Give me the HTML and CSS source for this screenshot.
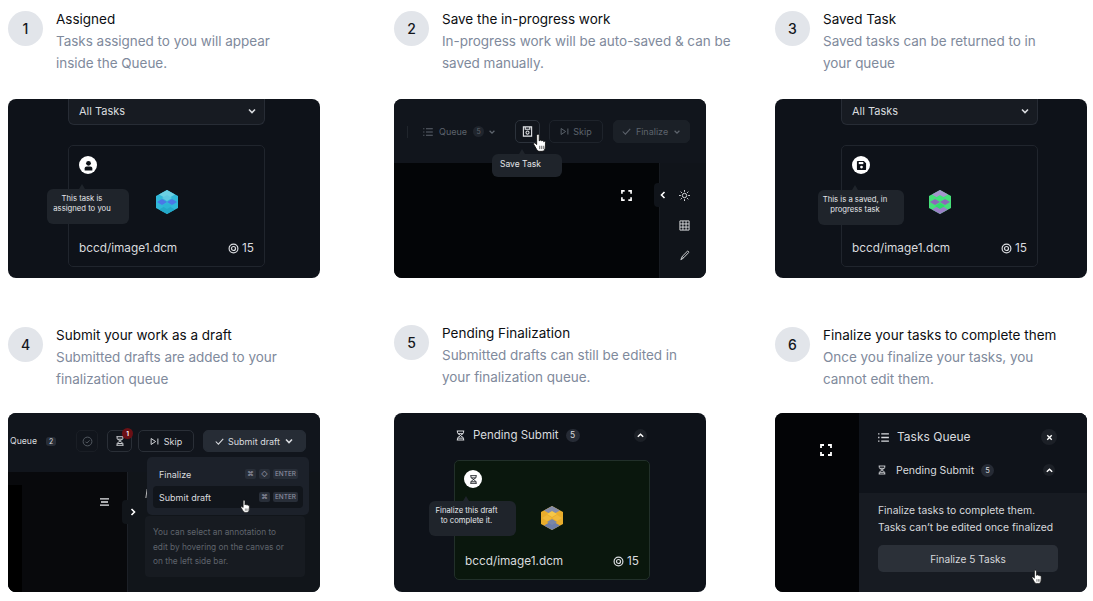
FILE: index.html
```html
<!DOCTYPE html>
<html lang="en">
<head>
<meta charset="utf-8">
<title>Task workflow</title>
<link rel="stylesheet" href="styles.css">
</head>
<body>
<svg class="defs" aria-hidden="true">
  <symbol id="cube" viewBox="0 0 24 24">
    <polygon class="c-side" points="12,0 23,6 23,18 12,24 1,18 1,6"/>
    <polygon class="c-top" points="12,0 20,4.500 12,9 4,4.500"/>
    <polygon class="c-low" points="12,15 20,19.500 12,24 4,19.500"/>
    <polygon class="c-mid" points="2,12 7,9 12,12 7,15"/>
    <polygon class="c-mid" points="22,12 17,9 12,12 17,15"/>
    <polygon class="c-core" points="12,5 17,8 12,11 7,8"/>
    <polygon class="c-core2" points="12,13 17,16 12,19 7,16"/>
  </symbol>
  <symbol id="hand" viewBox="0 0 14 18">
    <path d="M4.500 1.500c.7-.8 1.800-.4 1.800.6v5l.3-.1c.1-1 1.600-1 1.700 0l.2.300c.2-.9 1.600-.8 1.700.2l.1.400c.4-.7 1.600-.5 1.600.5v4.100c0 2-1.200 4-3 4H6.500c-1.200 0-2-.8-2.600-1.800L1.300 10.200c-.5-.9.600-1.700 1.400-1L4 10.400V2.200c0-.3.200-.5.500-.7z" fill="#fff" stroke="#111" stroke-width=".8"/>
    <path d="M6.800 11.500v3M8.600 11.500v3M10.400 11.500v3" stroke="#111" stroke-width=".6" fill="none"/>
  </symbol>
  <symbol id="hourglass" viewBox="0 0 12 14">
    <path d="M1 1h10M1 13h10M2 1v2.500c0 1.500 4 2.500 4 3.500s-4 2-4 3.500V13M10 1v2.500C10 5 6 6 6 7s4 2 4 3.500V13M2.500 4.500h7M2.500 10.500h7" fill="none" stroke="currentColor" stroke-width="1.300"/>
  </symbol>
  <symbol id="target" viewBox="0 0 12 12">
    <circle cx="6" cy="6" r="4.800" fill="none" stroke="currentColor" stroke-width="1.300"/>
    <circle cx="6" cy="6" r="2.200" fill="none" stroke="currentColor" stroke-width="1.300"/>
  </symbol>
  <symbol id="corners" viewBox="0 0 12 12">
    <path d="M1 4V1h3M8 1h3v3M11 8v3H8M4 11H1V8" fill="none" stroke="currentColor" stroke-width="1.800"/>
  </symbol>
  <symbol id="list" viewBox="0 0 12 10">
    <path d="M3.500 1H12M3.500 5H12M3.500 9H12M0 1h1.500M0 5h1.500M0 9h1.500" fill="none" stroke="currentColor" stroke-width="1.400"/>
  </symbol>
  <symbol id="chev-down" viewBox="0 0 10 10">
    <path d="M2 3.500l3 3 3-3" fill="none" stroke="currentColor" stroke-width="1.600"/>
  </symbol>
  <symbol id="chev-up" viewBox="0 0 10 10">
    <path d="M2 6.500l3-3 3 3" fill="none" stroke="currentColor" stroke-width="1.600"/>
  </symbol>
  <symbol id="skip" viewBox="0 0 12 10">
    <path d="M1.500 1v8l6-4zM10.500 1v8" fill="none" stroke="currentColor" stroke-width="1.300"/>
  </symbol>
  <symbol id="check" viewBox="0 0 12 10">
    <path d="M1 5l3.500 3.500L11 1.500" fill="none" stroke="currentColor" stroke-width="1.400"/>
  </symbol>
</svg>

<main class="steps">

  <section class="step">
    <header class="step-head">
      <span class="num">1</span>
      <div class="step-text"><h2>Assigned</h2><p>Tasks assigned to you will appear<br>inside the Queue.</p></div>
    </header>
    <div class="shot queue-shot">
      <div class="select"><span>All Tasks</span><svg class="i10"><use href="#chev-down"/></svg></div>
      <div class="card">
        <span class="avatar">
          <svg viewBox="0 0 12 12" class="i11"><circle cx="6" cy="3.600" r="2.600" fill="#0d1117"/><path d="M1.800 11.500V9.300c0-1.400 1-2.300 2.300-2.300h3.800c1.300 0 2.300.9 2.300 2.300v2.200z" fill="#0d1117"/></svg>
        </span>
        <svg class="cube cube-blue"><use href="#cube"/></svg>
        <div class="card-foot"><span>bccd/image1.dcm</span><span class="score"><svg class="i11"><use href="#target"/></svg>15</span></div>
        <div class="tip tip-a">This task is<br>assigned to you</div>
      </div>
    </div>
  </section>

  <section class="step">
    <header class="step-head">
      <span class="num">2</span>
      <div class="step-text"><h2>Save the in-progress work</h2><p>In-progress work will be auto-saved &amp; can be<br>saved manually.</p></div>
    </header>
    <div class="shot">
      <div class="bar bar-save">
        <span class="sep"></span>
        <svg class="bar-list"><use href="#list"/></svg>
        <span class="bar-label">Queue</span>
        <span class="pill">5</span>
        <svg class="i8 dim"><use href="#chev-down"/></svg>
        <span class="btn btn-save">
          <svg viewBox="0 0 12 12" class="i11"><path d="M1.500 1h9v10h-9zM3.500 1v2.500h5V1" fill="none" stroke="#e4e6e9" stroke-width="1.200"/><circle cx="6" cy="7.200" r="1.700" fill="none" stroke="#e4e6e9" stroke-width="1.100"/></svg>
          <svg class="hand hand-save"><use href="#hand"/></svg>
        </span>
        <span class="btn btn-skip"><svg class="i9"><use href="#skip"/></svg>Skip</span>
        <span class="btn btn-final"><svg class="i9"><use href="#check"/></svg>Finalize<svg class="i8"><use href="#chev-down"/></svg></span>
      </div>
      <div class="stage">
        <div class="canvas"><svg class="corners"><use href="#corners"/></svg></div>
        <div class="tools">
          <span class="tab tab-left"><svg class="i10"><use href="#chev-up"/></svg></span>
          <svg viewBox="0 0 12 12" class="i11"><circle cx="6" cy="6" r="2.400" fill="none" stroke="currentColor"/><path d="M6 0v2M6 10v2M0 6h2M10 6h2M1.800 1.800l1.400 1.400M8.800 8.800l1.400 1.400M10.200 1.800L8.800 3.200M3.200 8.800l-1.400 1.400" stroke="currentColor"/></svg>
          <svg viewBox="0 0 12 12" class="i11"><path d="M1 1h10v10H1zM1 4.300h10M1 7.700h10M4.300 1v10M7.700 1v10" fill="none" stroke="currentColor"/></svg>
          <svg viewBox="0 0 12 12" class="i11"><path d="M3.500 7L9 1.500c.8-.8 2.200.5 1.400 1.400L5 8.500zM3.500 7.200L2 10.500l3-1.700" fill="none" stroke="currentColor"/></svg>
        </div>
      </div>
      <div class="tip tip-save">Save Task</div>
    </div>
  </section>

  <section class="step">
    <header class="step-head">
      <span class="num">3</span>
      <div class="step-text"><h2>Saved Task</h2><p>Saved tasks can be returned to in<br>your queue</p></div>
    </header>
    <div class="shot queue-shot queue-shot-wide">
      <div class="select"><span>All Tasks</span><svg class="i10"><use href="#chev-down"/></svg></div>
      <div class="card">
        <span class="avatar">
          <svg viewBox="0 0 12 12" class="i11"><path d="M1 2c0-.6.400-1 1-1h6.500L11 3.500V10c0 .6-.4 1-1 1H2c-.6 0-1-.4-1-1z" fill="#0d1117"/><rect x="3" y="2.200" width="5" height="2.300" fill="#fff"/><circle cx="6" cy="7.700" r="1.500" fill="#fff"/></svg>
        </span>
        <svg class="cube cube-green"><use href="#cube"/></svg>
        <div class="card-foot"><span>bccd/image1.dcm</span><span class="score"><svg class="i11"><use href="#target"/></svg>15</span></div>
        <div class="tip tip-b">This is a saved, in<br>progress task</div>
      </div>
    </div>
  </section>

  <section class="step step-low">
    <header class="step-head">
      <span class="num">4</span>
      <div class="step-text"><h2>Submit your work as a draft</h2><p>Submitted drafts are added to your<br>finalization queue</p></div>
    </header>
    <div class="shot">
      <div class="bar bar-draft">
        <span class="draft-queue">Queue</span>
        <span class="pill pill-sq">2</span>
        <span class="btn btn-ok"><svg viewBox="0 0 12 12" class="i11"><circle cx="6" cy="6" r="4.800" fill="none" stroke="currentColor"/><path d="M3.800 6.200l1.500 1.500 3-3" fill="none" stroke="currentColor"/></svg></span>
        <span class="btn btn-glass"><svg class="i10"><use href="#hourglass"/></svg><b class="alert">1</b></span>
        <span class="btn btn-dskip"><svg class="i9"><use href="#skip"/></svg>Skip</span>
        <span class="btn btn-submit"><svg class="i9"><use href="#check"/></svg>Submit draft<svg class="i10"><use href="#chev-down"/></svg></span>
      </div>
      <div class="stage">
        <div class="dark-col">
          <span class="strip"></span>
          <svg viewBox="0 0 11 8" class="lines"><path d="M1 .8h9M2 4h7M1 7.200h9" stroke="currentColor" stroke-width="1.300"/></svg>
        </div>
        <div class="side">
          <span class="tab tab-right"><svg class="i10"><use href="#chev-up"/></svg></span>
          <span class="caret"></span>
          <p class="note">You can select an annotation to<br>edit by hovering on the canvas or<br>on the left side bar.</p>
        </div>
      </div>
      <div class="menu">
        <div class="menu-row"><span>Finalize</span><span class="keys"><kbd>⌘</kbd><kbd>◇</kbd><kbd>ENTER</kbd></span></div>
        <div class="menu-row menu-row-on"><span>Submit draft</span><span class="keys"><kbd>⌘</kbd><kbd>ENTER</kbd></span></div>
      </div>
      <svg class="hand hand-menu"><use href="#hand"/></svg>
    </div>
  </section>

  <section class="step">
    <header class="step-head">
      <span class="num">5</span>
      <div class="step-text"><h2>Pending Finalization</h2><p>Submitted drafts can still be edited in<br>your finalization queue.</p></div>
    </header>
    <div class="shot pending-shot">
      <div class="pending-head">
        <svg class="glass-lg"><use href="#hourglass"/></svg>
        <span class="pending-title">Pending Submit</span>
        <span class="pill pill-lg">5</span>
        <span class="round"><svg class="i9"><use href="#chev-up"/></svg></span>
      </div>
      <div class="card card-green">
        <span class="avatar"><svg class="i9 ink"><use href="#hourglass"/></svg></span>
        <svg class="cube cube-gold"><use href="#cube"/></svg>
        <div class="card-foot"><span>bccd/image1.dcm</span><span class="score"><svg class="i11"><use href="#target"/></svg>15</span></div>
        <div class="tip tip-c">Finalize this draft<br>to complete it.</div>
      </div>
    </div>
  </section>

  <section class="step step-low">
    <header class="step-head">
      <span class="num">6</span>
      <div class="step-text"><h2>Finalize your tasks to complete them</h2><p>Once you finalize your tasks, you<br>cannot edit them.</p></div>
    </header>
    <div class="shot final-shot">
      <div class="final-canvas"><svg class="corners corners-lg"><use href="#corners"/></svg></div>
      <div class="final-panel">
        <div class="final-top">
          <div class="final-row">
            <svg class="list-lg"><use href="#list"/></svg>
            <span class="final-title">Tasks Queue</span>
            <span class="round round-x"><svg viewBox="0 0 10 10" class="i9"><path d="M2.500 2.500l5 5M7.500 2.500l-5 5" stroke="currentColor" stroke-width="1.500"/></svg></span>
          </div>
          <div class="final-row final-row-2">
            <svg class="glass-md"><use href="#hourglass"/></svg>
            <span class="final-sub">Pending Submit</span>
            <span class="pill pill-md">5</span>
            <span class="round round-sm"><svg class="i9"><use href="#chev-up"/></svg></span>
          </div>
        </div>
        <div class="final-body">
          <p>Finalize tasks to complete them.<br>Tasks can’t be edited once finalized</p>
          <span class="final-btn">Finalize 5 Tasks</span>
          <svg class="hand hand-final"><use href="#hand"/></svg>
        </div>
      </div>
    </div>
  </section>

</main>
</body>
</html>
```
FILE: styles.css
```css
* { box-sizing: border-box; }
html, body { margin: 0; padding: 0; background: #fff; }
body { width: 1093px; height: 601px; overflow: hidden; font-family: Inter, "Liberation Sans", sans-serif; }
h2, p { margin: 0; font-weight: 400; }
svg { display: block; flex: none; }
.defs { position: absolute; width: 0; height: 0; }

.steps { display: grid; grid-template-columns: 386px 381px 312px; grid-template-rows: 270px 270px; row-gap: 44px; padding: 8px 0 0 8px; }
.step { display: flex; flex-direction: column; width: 312px; }
.step-head { display: flex; gap: 13px; height: 66px; margin-bottom: 25px; white-space: nowrap; }
.step-low .step-head { margin-top: 2px; margin-bottom: 23px; }
.num { width: 35px; height: 35px; margin-top: 3px; flex: none; border-radius: 50%; background: #e2e5ea; color: #14171c; font-size: 14px; font-weight: 500; display: flex; align-items: center; justify-content: center; }
.step-text h2 { font-size: 13.500px; line-height: 22px; color: #0c0e12; }
.step-text p { font-size: 13.500px; line-height: 22px; color: #808a9c; letter-spacing: -.03px; }

.shot { position: relative; width: 312px; height: 179px; overflow: hidden; border-radius: 8px; background: #0e1219; color: #d9dbdf; }
.shot .i8 { width: 8px; height: 8px; }
.i9 { width: 9px; height: 9px; }
.i10 { width: 10px; height: 10px; }
.i11 { width: 11px; height: 11px; }

.queue-shot { padding-left: 60px; }
.queue-shot-wide { padding-left: 66px; }
.select { width: 197px; height: 26px; margin-bottom: 20px; padding: 0 7px 1px 10px; display: flex; justify-content: space-between; align-items: center; background: #171b22; border: 1px solid #272c35; border-top: 0; border-radius: 0 0 6px 6px; font-size: 11px; }
.card { position: relative; width: 197px; height: 122px; padding: 10px 10px 9px; display: flex; flex-direction: column; border: 1px solid #20252d; border-radius: 5px; }
.avatar { width: 18px; height: 18px; border-radius: 50%; background: #fff; display: flex; align-items: center; justify-content: center; }
.ink { color: #0d1117; }
.cube { width: 24px; height: 24px; margin-top: 16px; align-self: center; }
.c-side { fill: var(--side); } .c-top { fill: var(--top); } .c-mid { fill: var(--mid); } .c-low { fill: var(--low); } .c-core { fill: var(--core); } .c-core2 { fill: var(--core2); }
.cube-blue { --side: #2fb8d9; --top: #6bd0e4; --mid: #4a78e6; --low: #23a8c8; --core: #5ec8e2; --core2: #2cb4d4; }
.cube-green { --side: #46e07a; --top: #a694cf; --mid: #8c68ba; --low: #9a80c6; --core: #3fe27a; --core2: #2fdc6c; }
.cube-gold { --side: #e9ad2c; --top: #858da8; --mid: #f0b93a; --low: #6d7da8; --core: #f5c747; --core2: #7a86a8; }
.card-foot { margin-top: auto; display: flex; justify-content: space-between; align-items: center; font-size: 11.800px; line-height: 18px; }
.score { display: flex; align-items: center; gap: 3px; }

.tip { position: absolute; background: #1f242b; border-radius: 6px; color: #e4e6e9; text-align: center; font-size: 7.700px; line-height: 10px; display: flex; align-items: center; justify-content: center; white-space: nowrap; }
.tip::before { content: ""; position: absolute; top: -5px; border: 3px solid transparent; border-top: 0; border-bottom: 5px solid #1f242b; }
.tip-a, .tip-b, .tip-c { padding: 0 12px 5px 0; }
.tip-a { left: -22px; top: 43px; width: 82px; height: 35px; }
.tip-a::before { left: 32px; }
.tip-b { left: -24px; top: 44px; width: 86px; height: 35px; }
.tip-b::before { left: 34px; }
.tip-c { left: -26px; top: 40px; width: 87px; height: 35px; }
.tip-c::before { left: 34px; }
.tip-save { left: 98px; top: 55px; width: 70px; height: 23px; font-size: 8.500px; justify-content: flex-start; padding: 0 0 3px 8px; }
.tip-save::before { left: 27px; }

.bar { display: flex; align-items: center; background: #11151c; }
.bar-save { height: 64px; padding: 1px 0 0 13px; color: #5d636c; font-size: 9px; }
.sep { width: 1px; height: 12px; background: #20252c; margin-right: 15px; }
.bar-list { width: 10px; height: 8px; margin-right: 6px; }
.bar-label { margin-right: 6px; }
.pill { width: 11px; height: 11px; border-radius: 50%; background: #20252d; font-size: 7px; display: flex; align-items: center; justify-content: center; margin-right: 4px; }
.btn { position: relative; height: 23px; display: flex; align-items: center; border-radius: 5px; border: 1px solid #1e232b; }
.btn-save { width: 25px; margin-left: 19px; justify-content: center; border-color: #2c323b; }
.hand { position: absolute; width: 14px; height: 18px; }
.hand-save { left: 16px; top: 12px; width: 16px; height: 20px; }
.btn-skip { width: 54px; margin-left: 9px; gap: 4px; justify-content: center; }
.btn-final { width: 77px; margin-left: 10px; gap: 5px; justify-content: center; background: #1b2027; border-color: #1b2027; }

.stage { display: flex; height: 115px; }
.canvas { flex: 1; padding: 27px 27px 0 0; background: #030507; display: flex; justify-content: flex-end; }
.corners { width: 11px; height: 11px; color: #fff; }
.tools { position: relative; width: 47px; padding: 27px 0 0 19px; display: flex; flex-direction: column; gap: 19px; background: #10141a; border-left: 1px solid #171b21; color: #dfe1e4; }
.tab { position: absolute; width: 6px; height: 24px; left: -6px; top: 20px; background: #10141a; border-radius: 4px 0 0 4px; color: #fff; }
.tab .i10 { position: absolute; top: 7px; }
.tab-left .i10 { left: 4px; transform: rotate(-90deg); }

.bar-draft { height: 59px; padding: 0 0 3px 2px; font-size: 9px; color: #d9dbdf; }
.draft-queue { margin-right: 9px; font-size: 8.700px; }
.pill-sq { width: 10px; height: 9px; border-radius: 3px; margin: 0; background: #282e38; }
.bar-draft .btn { height: 22px; }
.btn-ok { width: 22px; margin-left: 20px; justify-content: center; color: #5a6068; border-color: #1a1e25; }
.btn-glass { width: 25px; margin-left: 9px; justify-content: center; border-color: #2a2f37; }
.alert { position: absolute; left: 14px; top: -3px; width: 11px; height: 11px; border-radius: 50%; background: #6b1015; color: #fff; font-size: 6.500px; font-weight: 600; display: flex; align-items: center; justify-content: center; }
.btn-dskip { width: 56px; margin-left: 6px; gap: 5px; justify-content: center; border-color: #2a2f37; }
.btn-submit { width: 103px; margin-left: 9px; gap: 4px; justify-content: center; background: #262c35; border-color: #262c35; }
.dark-col { position: relative; width: 119px; height: 120px; display: flex; justify-content: flex-end; background: #08090c; padding: 26px 17px 0 0; }
.strip { position: absolute; left: 0; top: 13px; bottom: 0; width: 14px; background: #000; }
.lines { width: 11px; height: 8px; color: #e4e6e9; }
.side { position: relative; flex: 1; height: 120px; padding: 44px 15px 0 17px; background: #11151a; border-left: 1px solid #1c2027; }
.tab-right { top: 28px; background: #11151a; }
.tab-right .i10 { left: 6px; transform: rotate(90deg); }
.caret { position: absolute; left: 18px; top: 17px; width: 1px; height: 9px; background: #bbb; transform: rotate(8deg); }
.note { height: 61px; padding: 9px 8px; background: #171b21; border-radius: 4px; color: #5f646c; font-size: 8.300px; line-height: 14.500px; white-space: nowrap; }
.menu { position: absolute; left: 139px; top: 44px; width: 162px; height: 58px; padding: 6px; background: #1c212a; border-radius: 5px; font-size: 9px; display: flex; flex-direction: column; gap: 1px; }
.menu-row { height: 22px; padding: 0 5px 0 6px; display: flex; align-items: center; justify-content: space-between; border-radius: 4px; }
.menu-row-on { background: #11151b; }
.keys { display: flex; gap: 3px; }
kbd { padding: 0 2px; min-width: 11px; height: 10px; background: #282e38; border-radius: 2px; color: #99a; font: 6.500px/10px Inter, sans-serif; text-align: center; }
.hand-menu { left: 232px; top: 86px; width: 11px; height: 15px; }

.pending-shot { padding: 15px 0 0 60px; }
.pending-head { width: 196px; height: 14px; margin-bottom: 18px; padding: 0 3px 0 2px; display: flex; align-items: center; font-size: 11.500px; }
.glass-lg { width: 9px; height: 11px; margin-right: 8px; }
.pending-title { margin-right: 7px; }
.pill-lg { width: 14px; height: 13px; border-radius: 7px; background: #262b35; font-size: 8.500px; margin: 0; }
.round { width: 13px; height: 13px; margin-left: auto; border-radius: 50%; background: #1c2027; display: flex; align-items: center; justify-content: center; color: #fff; }
.card-green { width: 196px; height: 120px; padding: 9px 10px 9px 9px; background: #0a170d; border-color: #22302a; }
.card-green .cube { margin-top: 18px; }
.card-green .card-foot { padding-left: 1px; }

.final-shot { display: flex; }
.final-canvas { width: 84px; padding: 31px 0 0 45px; background: #030406; }
.corners-lg { width: 12px; height: 12px; }
.final-panel { flex: 1; display: flex; flex-direction: column; background: #171b22; }
.final-top { height: 80px; padding: 16px 30px 0 19px; background: #0f131a; }
.final-row { display: flex; align-items: center; height: 16px; }
.list-lg { width: 11px; height: 9px; margin-right: 8px; }
.final-title { font-size: 12px; margin-bottom: 2px; }
.round-x { width: 16px; height: 16px; }
.final-row-2 { margin-top: 18px; height: 14px; padding-right: 2px; font-size: 10.500px; }
.glass-md { width: 8px; height: 10px; margin-right: 10px; }
.final-sub { padding-top: 1px; }
.pill-md { width: 13px; height: 13px; background: #262b35; margin: 0 0 0 7px; font-size: 7.500px; }
.round-sm { width: 12px; height: 12px; }
.final-body { position: relative; padding: 9px 29px 0 19px; color: #d6d8dc; }
.final-body p { font-size: 10.350px; line-height: 17px; white-space: nowrap; }
.final-btn { margin-top: 9px; height: 27px; display: flex; align-items: center; justify-content: center; padding-top: 1px; background: #2b3038; border-radius: 5px; font-size: 10.100px; }
.hand-final { left: 172px; top: 76px; width: 12px; height: 16px; }
```
